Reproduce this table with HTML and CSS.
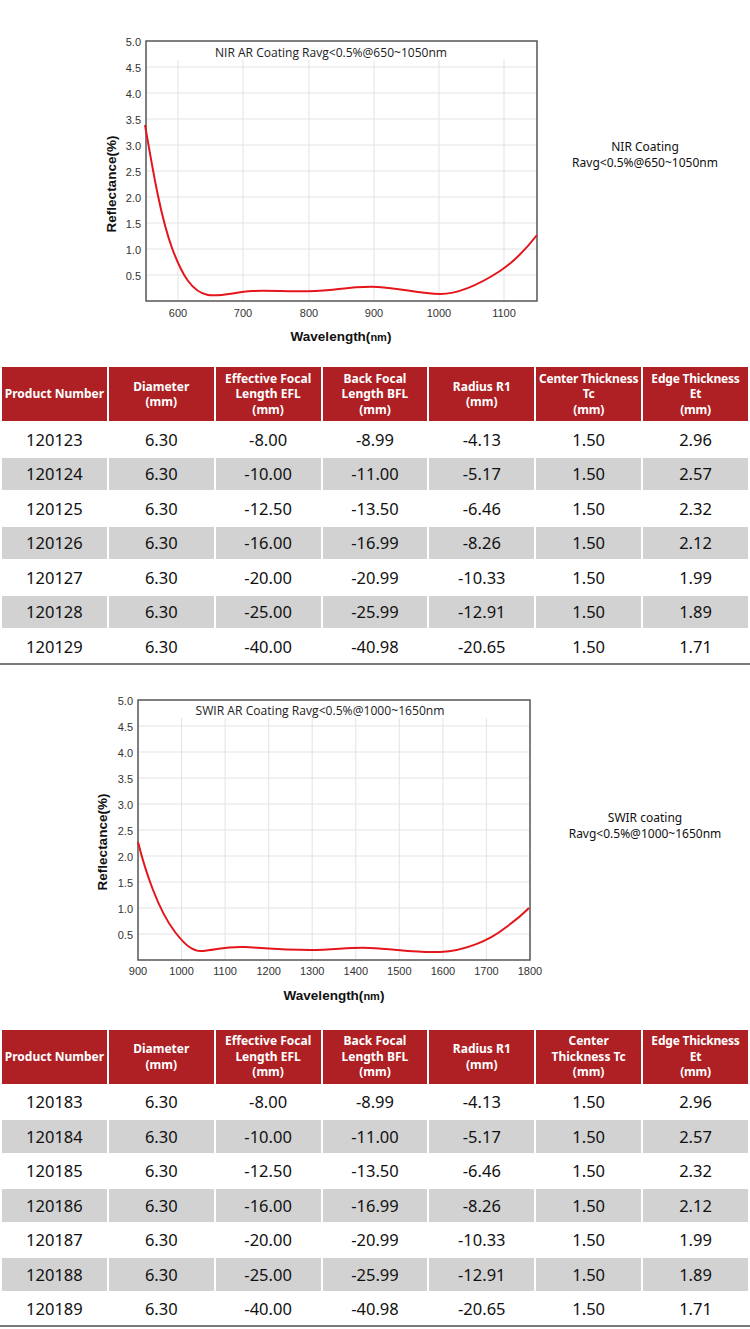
FILE: index.html
```html
<!DOCTYPE html>
<html lang="en">
<head>
<meta charset="utf-8">
<title>NIR / SWIR Coated Lenses</title>
<link rel="stylesheet" href="styles.css">
</head>
<body>
<div class="page">
  <section class="chart-row chart-row--nir">
    <svg class="chart" width="540" height="365" viewBox="0 0 540 365">
      <g class="grid">
        <line x1="178" y1="60" x2="178" y2="301"/>
        <line x1="243" y1="60" x2="243" y2="301"/>
        <line x1="309" y1="60" x2="309" y2="301"/>
        <line x1="374" y1="60" x2="374" y2="301"/>
        <line x1="439" y1="60" x2="439" y2="301"/>
        <line x1="504" y1="60" x2="504" y2="301"/>
        <line x1="146" y1="275" x2="537" y2="275"/>
        <line x1="146" y1="249" x2="537" y2="249"/>
        <line x1="146" y1="223" x2="537" y2="223"/>
        <line x1="146" y1="197" x2="537" y2="197"/>
        <line x1="146" y1="171" x2="537" y2="171"/>
        <line x1="146" y1="145" x2="537" y2="145"/>
        <line x1="146" y1="119" x2="537" y2="119"/>
        <line x1="146" y1="93" x2="537" y2="93"/>
        <line x1="146" y1="67" x2="537" y2="67"/>
      </g>
      <rect class="frame" x="146" y="41" width="391" height="260"/>
      <text class="plot-title" x="331" y="57" text-anchor="middle" textLength="232" lengthAdjust="spacingAndGlyphs">NIR AR Coating Ravg&lt;0.5%@650~1050nm</text>
      <g class="ytick" text-anchor="end">
        <text x="141" y="45.5">5.0</text>
        <text x="141" y="71.5">4.5</text>
        <text x="141" y="97.5">4.0</text>
        <text x="141" y="123.5">3.5</text>
        <text x="141" y="149.5">3.0</text>
        <text x="141" y="175.5">2.5</text>
        <text x="141" y="201.5">2.0</text>
        <text x="141" y="227.5">1.5</text>
        <text x="141" y="253.5">1.0</text>
        <text x="141" y="279.5">0.5</text>
      </g>
      <g class="xtick" text-anchor="middle">
        <text x="178" y="317">600</text>
        <text x="243" y="317">700</text>
        <text x="309" y="317">800</text>
        <text x="374" y="317">900</text>
        <text x="439" y="317">1000</text>
        <text x="504" y="317">1100</text>
      </g>
      <text class="axis-label" x="341" y="341" text-anchor="middle">Wavelength(<tspan class="unit">nm</tspan>)</text>
      <text class="axis-label" transform="translate(116 184) rotate(-90)" text-anchor="middle">Reflectance(%)</text>
      <path class="curve" d="M145,125 C152,165 160,215 172,248 C182,275 192,292 208,295 C220,297 235,292 252,291 C275,290 300,293 330,290 C348,288 362,286 378,287 C400,288 420,294 440,294 C460,294 480,284 500,271 C515,261 527,248 537,235"/>
    </svg>
    <div class="note">NIR Coating<br>Ravg&lt;0.5%@650~1050nm</div>
  </section>

  <table class="spec">
    <thead>
      <tr>
        <th>Product Number</th>
        <th>Diameter<br>(mm)</th>
        <th>Effective Focal<br>Length EFL<br>(mm)</th>
        <th>Back Focal<br>Length BFL<br>(mm)</th>
        <th>Radius R1<br>(mm)</th>
        <th class="nowrap">Center Thickness<br>Tc<br>(mm)</th>
        <th class="nowrap">Edge Thickness<br>Et<br>(mm)</th>
      </tr>
    </thead>
    <tbody>
      <tr><td>120123</td><td>6.30</td><td>-8.00</td><td>-8.99</td><td>-4.13</td><td>1.50</td><td>2.96</td></tr>
      <tr><td>120124</td><td>6.30</td><td>-10.00</td><td>-11.00</td><td>-5.17</td><td>1.50</td><td>2.57</td></tr>
      <tr><td>120125</td><td>6.30</td><td>-12.50</td><td>-13.50</td><td>-6.46</td><td>1.50</td><td>2.32</td></tr>
      <tr><td>120126</td><td>6.30</td><td>-16.00</td><td>-16.99</td><td>-8.26</td><td>1.50</td><td>2.12</td></tr>
      <tr><td>120127</td><td>6.30</td><td>-20.00</td><td>-20.99</td><td>-10.33</td><td>1.50</td><td>1.99</td></tr>
      <tr><td>120128</td><td>6.30</td><td>-25.00</td><td>-25.99</td><td>-12.91</td><td>1.50</td><td>1.89</td></tr>
      <tr><td>120129</td><td>6.30</td><td>-40.00</td><td>-40.98</td><td>-20.65</td><td>1.50</td><td>1.71</td></tr>
    </tbody>
  </table>

  <section class="chart-row chart-row--swir">
    <svg class="chart" width="540" height="363" viewBox="0 665 540 363">
      <g class="grid">
        <line x1="181.6" y1="718" x2="181.6" y2="960"/>
        <line x1="225.1" y1="718" x2="225.1" y2="960"/>
        <line x1="268.7" y1="718" x2="268.7" y2="960"/>
        <line x1="312.2" y1="718" x2="312.2" y2="960"/>
        <line x1="355.8" y1="718" x2="355.8" y2="960"/>
        <line x1="399.3" y1="718" x2="399.3" y2="960"/>
        <line x1="442.9" y1="718" x2="442.9" y2="960"/>
        <line x1="486.4" y1="718" x2="486.4" y2="960"/>
        <line x1="138" y1="934" x2="530" y2="934"/>
        <line x1="138" y1="908" x2="530" y2="908"/>
        <line x1="138" y1="882" x2="530" y2="882"/>
        <line x1="138" y1="856" x2="530" y2="856"/>
        <line x1="138" y1="830" x2="530" y2="830"/>
        <line x1="138" y1="804" x2="530" y2="804"/>
        <line x1="138" y1="778" x2="530" y2="778"/>
        <line x1="138" y1="752" x2="530" y2="752"/>
        <line x1="138" y1="726" x2="530" y2="726"/>
      </g>
      <rect class="frame" x="138" y="700" width="392" height="260"/>
      <text class="plot-title" x="320" y="715" text-anchor="middle" textLength="249" lengthAdjust="spacingAndGlyphs">SWIR AR Coating Ravg&lt;0.5%@1000~1650nm</text>
      <g class="ytick" text-anchor="end">
        <text x="133" y="704.5">5.0</text>
        <text x="133" y="730.5">4.5</text>
        <text x="133" y="756.5">4.0</text>
        <text x="133" y="782.5">3.5</text>
        <text x="133" y="808.5">3.0</text>
        <text x="133" y="834.5">2.5</text>
        <text x="133" y="860.5">2.0</text>
        <text x="133" y="886.5">1.5</text>
        <text x="133" y="912.5">1.0</text>
        <text x="133" y="938.5">0.5</text>
      </g>
      <g class="xtick" text-anchor="middle">
        <text x="138" y="975">900</text>
        <text x="181.6" y="975">1000</text>
        <text x="225.1" y="975">1100</text>
        <text x="268.7" y="975">1200</text>
        <text x="312.2" y="975">1300</text>
        <text x="355.8" y="975">1400</text>
        <text x="399.3" y="975">1500</text>
        <text x="442.9" y="975">1600</text>
        <text x="486.4" y="975">1700</text>
        <text x="530" y="975">1800</text>
      </g>
      <text class="axis-label" x="334" y="1000" text-anchor="middle">Wavelength(<tspan class="unit">nm</tspan>)</text>
      <text class="axis-label" transform="translate(107 842) rotate(-90)" text-anchor="middle">Reflectance(%)</text>
      <path class="curve" d="M138,842 C145,870 158,910 175,932 C185,945 193,952 203,951 C215,950 228,946 245,947 C262,948 285,950 310,950 C335,950 350,947 370,948 C395,949 415,953 440,952 C465,951 490,940 505,928 C515,921 523,914 529,908"/>
    </svg>
    <div class="note">SWIR coating<br>Ravg&lt;0.5%@1000~1650nm</div>
  </section>

  <table class="spec">
    <thead>
      <tr>
        <th>Product Number</th>
        <th>Diameter<br>(mm)</th>
        <th>Effective Focal<br>Length EFL<br>(mm)</th>
        <th>Back Focal<br>Length BFL<br>(mm)</th>
        <th>Radius R1<br>(mm)</th>
        <th>Center<br>Thickness Tc<br>(mm)</th>
        <th class="nowrap">Edge Thickness<br>Et<br>(mm)</th>
      </tr>
    </thead>
    <tbody>
      <tr><td>120183</td><td>6.30</td><td>-8.00</td><td>-8.99</td><td>-4.13</td><td>1.50</td><td>2.96</td></tr>
      <tr><td>120184</td><td>6.30</td><td>-10.00</td><td>-11.00</td><td>-5.17</td><td>1.50</td><td>2.57</td></tr>
      <tr><td>120185</td><td>6.30</td><td>-12.50</td><td>-13.50</td><td>-6.46</td><td>1.50</td><td>2.32</td></tr>
      <tr><td>120186</td><td>6.30</td><td>-16.00</td><td>-16.99</td><td>-8.26</td><td>1.50</td><td>2.12</td></tr>
      <tr><td>120187</td><td>6.30</td><td>-20.00</td><td>-20.99</td><td>-10.33</td><td>1.50</td><td>1.99</td></tr>
      <tr><td>120188</td><td>6.30</td><td>-25.00</td><td>-25.99</td><td>-12.91</td><td>1.50</td><td>1.89</td></tr>
      <tr><td>120189</td><td>6.30</td><td>-40.00</td><td>-40.98</td><td>-20.65</td><td>1.50</td><td>1.71</td></tr>
    </tbody>
  </table>
</div>
</body>
</html>
```

FILE: styles.css
```css
html, body {
  margin: 0;
  padding: 0;
  background: #ffffff;
}

.page {
  width: 750px;
  font-family: "Noto Sans", "Liberation Sans", sans-serif;
  color: #111;
}

.chart-row {
  display: flex;
  height: 365px;
}

.chart-row--swir {
  height: 363px;
}

.chart {
  display: block;
  flex: none;
  overflow: visible;
}

.grid line {
  stroke: #e3e3e3;
  stroke-width: 1;
}

.frame {
  fill: none;
  stroke: #555;
  stroke-width: 1.5;
}

.plot-title {
  font-family: "Open Sans", "Liberation Sans", sans-serif;
  font-size: 12px;
  fill: #222;
}

.ytick text,
.xtick text {
  font-family: "Liberation Sans", Arial, sans-serif;
  font-size: 11px;
  fill: #333;
}

.axis-label {
  font-family: "Liberation Sans", Arial, sans-serif;
  font-size: 13.5px;
  font-weight: bold;
  fill: #111;
}

.axis-label .unit {
  font-size: 11px;
}

.curve {
  fill: none;
  stroke: #e3161b;
  stroke-width: 2;
}

.note {
  flex: 1;
  padding-top: 139px;
  text-align: center;
  font-size: 12px;
  line-height: 16px;
  color: #111;
}

.chart-row--swir .note {
  padding-top: 145px;
}

.spec {
  width: 750px;
  border-collapse: collapse;
  table-layout: fixed;
  text-align: center;
}

.spec th,
.spec td {
  border: 2px solid #fff;
  padding: 0;
}

.spec th {
  background: #ae2024;
  color: #fff;
  font-size: 12px;
  font-weight: bold;
  line-height: 15.5px;
}

.spec thead tr {
  height: 56px;
}

.spec th.nowrap {
  white-space: nowrap;
  letter-spacing: -0.2px;
}

.spec tbody tr {
  height: 34.5px;
}

.spec td {
  font-size: 16.5px;
  color: #111;
}

.spec tbody tr:nth-child(even) td {
  background: #d2d2d2;
}

.spec tbody tr:last-child td {
  border-bottom: 2px solid #7a7a7a;
}
```
